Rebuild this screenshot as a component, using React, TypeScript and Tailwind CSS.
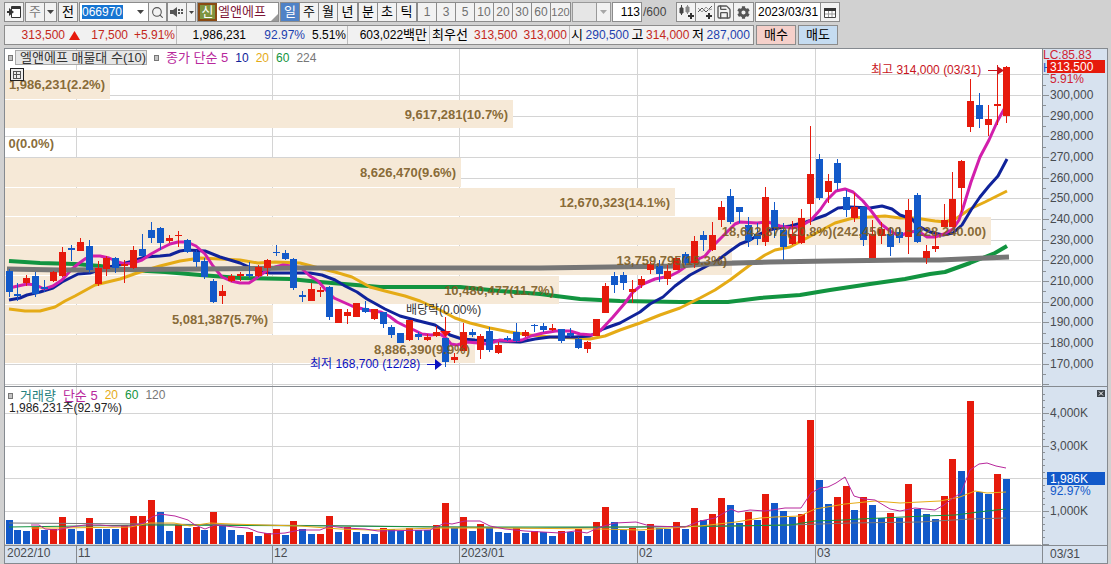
import type { ReactNode } from "react";
import { Save, Search } from "lucide-react";
import { FaCog } from "react-icons/fa";

type Tone = "r" | "b";

// tone, body top, body bottom, wick top, wick bottom
type Candle = [Tone, number, number, number, number];

const FILL: Record<Tone, string> = { r: "#e61a0c", b: "#1259c9" };

const STEP = 8.905;
const xAt = (i: number) => Math.round(9.5 + i * STEP);

const CANDLES: Candle[] = [
  ["b", 271, 292, 269, 297], ["b", 294, 296, 283, 301], ["r", 278, 283, 275, 286], ["b", 276, 294, 272, 297],
  ["b", 287, 289, 280, 292], ["r", 272, 281, 271, 282], ["r", 252, 276, 247, 277], ["b", 248, 250, 245, 261],
  ["r", 242, 251, 238, 251], ["b", 246, 270, 240, 273], ["r", 268, 284, 261, 286], ["r", 258, 269, 256, 276],
  ["b", 258, 268, 257, 273], ["r", 264, 266, 260, 283], ["r", 250, 268, 246, 269], ["b", 249, 256, 234, 257],
  ["b", 230, 238, 222, 243], ["b", 228, 243, 227, 250], ["r", 238, 241, 235, 243], ["r", 235, 236, 231, 247],
  ["b", 240, 252, 239, 253], ["b", 252, 262, 250, 267], ["b", 261, 277, 258, 279], ["b", 281, 302, 279, 303],
  ["r", 291, 296, 285, 304], ["r", 276, 281, 274, 282], ["r", 274, 276, 272, 281], ["b", 274, 276, 262, 278],
  ["r", 267, 276, 265, 277], ["r", 260, 268, 259, 276], ["b", 252, 253, 245, 256], ["b", 253, 259, 250, 260],
  ["b", 259, 288, 258, 290], ["b", 295, 297, 291, 302], ["r", 289, 301, 283, 301], ["r", 290, 292, 287, 297],
  ["b", 287, 317, 286, 320], ["r", 309, 323, 309, 323], ["r", 312, 316, 309, 324], ["r", 303, 317, 303, 317],
  ["b", 308, 312, 301, 313], ["r", 309, 319, 309, 320], ["b", 312, 324, 312, 328], ["b", 327, 335, 325, 338],
  ["b", 333, 343, 333, 343], ["r", 320, 340, 320, 341], ["b", 334, 337, 332, 340], ["r", 337, 340, 334, 341],
  ["r", 332, 336, 326, 337], ["b", 338, 362, 338, 367], ["r", 357, 360, 353, 363], ["r", 332, 351, 323, 351],
  ["b", 332, 335, 329, 337], ["r", 336, 350, 334, 359], ["b", 331, 350, 327, 352], ["r", 345, 353, 342, 354],
  ["b", 338, 340, 336, 341], ["b", 332, 341, 323, 342], ["r", 332, 336, 330, 337], ["b", 325, 326, 324, 332],
  ["b", 326, 330, 323, 332], ["r", 328, 330, 324, 331], ["b", 329, 341, 329, 343], ["b", 333, 336, 328, 337],
  ["b", 339, 348, 337, 349], ["r", 342, 349, 341, 353], ["r", 319, 336, 319, 336], ["r", 286, 313, 283, 313],
  ["b", 276, 285, 272, 293], ["b", 275, 283, 272, 290], ["r", 289, 292, 280, 303], ["r", 279, 285, 276, 288],
  ["r", 264, 270, 262, 274], ["b", 266, 274, 260, 282], ["r", 271, 279, 265, 285], ["r", 258, 270, 258, 270],
  ["b", 254, 263, 252, 265], ["r", 241, 263, 236, 268], ["b", 235, 240, 231, 251], ["r", 235, 250, 222, 251],
  ["r", 207, 220, 201, 227], ["b", 196, 222, 189, 224], ["b", 207, 212, 207, 223], ["b", 225, 241, 217, 247],
  ["b", 234, 239, 223, 245], ["r", 197, 242, 187, 246], ["b", 210, 228, 202, 238], ["b", 230, 247, 223, 260],
  ["r", 234, 244, 221, 245], ["r", 218, 243, 209, 244], ["r", 174, 204, 126, 225], ["b", 159, 198, 154, 200],
  ["r", 181, 192, 174, 203], ["b", 163, 183, 159, 190], ["b", 197, 210, 190, 217], ["r", 207, 218, 193, 222],
  ["b", 207, 240, 207, 246], ["r", 234, 258, 220, 258], ["r", 229, 236, 222, 244], ["b", 234, 247, 227, 256],
  ["b", 232, 238, 227, 243], ["r", 210, 237, 199, 254], ["b", 195, 242, 193, 243], ["r", 251, 258, 245, 264],
  ["r", 246, 249, 232, 252], ["r", 220, 227, 204, 227], ["r", 199, 227, 172, 227], ["r", 161, 188, 160, 212],
  ["r", 101, 127, 79, 132], ["b", 105, 119, 93, 128], ["r", 119, 125, 105, 136], ["r", 104, 106, 65, 125],
  ["r", 67, 116, 66, 123],
];

const VOLUMES =
  "b520 b530 b531 r527 b530 r529 r517 b529 b531 r518 b529 b529 b529 r525 r516 r516 r500 b512 b531 r525 " +
  "b528 r527 b530 r512 b525 b530 b535 r532 b536 r533 r529 b535 r521 b529 b534 r534 r516 b532 r527 b532 " +
  "b534 b534 r528 b529 b531 r528 b530 b530 r525 r503 b528 r517 b531 r524 b527 b532 b533 r528 b533 r531 " +
  "b532 b536 r531 b532 r529 b536 r522 r507 b522 b530 r528 b531 r524 b528 b529 r522 b529 r508 b520 r514 " +
  "r498 b505 b523 r512 b520 r494 b503 b511 b517 r514 r420 b480 b504 r497 r486 b510 r497 b505 b518 r513 " +
  "b518 r484 b509 b514 b519 r496 r459 b471 r401 b492 b494 r474 b479";

const MA5 =
  "9,288 18,286 27,284 36,285 44,289 53,286 62,280 71,270 78,264 85,259 92,256 100,256 109,258 118,262 125,264 133,263 142,260 151,254 160,249 170,244 178,242 187,242 196,246 205,254 213,266 222,277 231,281 240,283 249,283 258,277 266,271 275,267 283,265 292,266 301,268 310,276 318,281 325,289 334,298 343,302 352,306 363,309 372,311 381,312 389,316 397,322 405,326 414,330 422,334 431,335 440,334 446,338 451,344 457,345 467,342 478,343 487,344 500,340 510,341 522,340 531,336 543,333 556,331 570,331 580,334 592,335 600,331 613,317 625,303 633,292 643,284 655,279 670,276 678,272 692,262 705,256 715,244 725,234 735,224 740,222 757,223 768,222 780,226 792,228 801,226 811,220 820,210 827,200 836,191 845,189 853,192 863,201 872,212 881,224 890,231 899,236 910,232 918,231 927,237 935,237 944,234 953,229 959,220 963,208 971,182 980,157 989,140 998,120 1007,104";
const MA10 =
  "9,300 20,298 27,295 40,292 53,288 62,282 78,274 90,273 105,268 118,265 133,261 145,257 160,256 170,255 180,251 187,250 205,251 220,257 240,263 258,271 270,273 310,273 322,275 335,280 345,286 357,292 367,299 385,309 400,316 415,320 435,325 450,335 462,339 475,340 500,341 520,342 535,339 550,337 575,337 590,336 603,329 620,323 640,312 650,304 663,297 675,286 690,275 705,267 718,260 730,251 740,244 750,240 760,234 773,229 790,226 806,222 826,215 838,208 850,207 870,208 882,206 892,209 900,215 912,219 918,226 930,232 943,235 953,233 962,225 971,210 980,197 989,186 998,176 1007,159";
const MA20 =
  "9,309 25,311 40,311 55,307 65,301 75,296 95,285 120,279 140,272 160,266 180,261 200,258 220,259 240,260 258,263 275,262 300,263 315,267 335,272 352,277 370,287 385,291 405,296 420,301 440,310 455,318 470,323 490,328 510,332 530,335 550,337 575,338 590,339 605,336 620,330 640,323 660,315 680,308 700,298 715,290 730,280 750,265 765,255 775,250 790,247 805,239 820,231 835,223 853,218 870,217 885,216 900,218 915,218 935,221 945,222 957,218 970,209 985,202 1007,191";
const MA60 =
  "9,261 40,263 75,264 100,266 130,270 165,272 200,275 240,278 290,279 320,282 380,287 460,287 500,291 540,294 580,299 620,301 680,302 728,302 760,298 800,295 830,290 870,284 905,279 930,274 945,272 970,263 985,257 995,253 1007,246";
const MA224 =
  "7,269 60,270 200,269 300,268 540,268 680,266 705,264 770,262 830,261 905,260 940,260 985,258 1009,257";

const VMA5 =
  "31,525 39,525 45,529 57,530 70,527 85,525 100,525 112,526 130,526 144,523 152,517 160,514 175,516 188,520 195,525 205,529 215,525 235,527 248,528 258,532 270,534 285,533 300,530 320,530 330,526 345,528 365,529 378,531 430,530 445,523 452,524 465,521 480,521 490,526 505,529 525,531 560,533 575,531 587,533 600,527 615,523 636,522 650,526 685,527 700,521 715,518 731,509 738,512 750,510 765,511 785,508 801,508 811,493 820,488 828,487 836,483 845,477 854,496 864,499 875,500 890,509 900,511 915,508 935,510 944,505 953,498 961,493 970,470 979,464 987,463 996,466 1006,468";
const VMA20 =
  "31,528 60,528 130,527 150,523 174,523 190,526 210,523 232,524 262,525 300,526 340,529 370,530 440,528 500,528 600,529 640,530 700,526 736,522 760,518 775,517 800,516 815,509 845,504 875,501 900,503 940,501 960,497 975,491 987,493 1006,492";
const VMA60 =
  "9,527 150,525 340,526 440,527 640,527 730,526 790,525 815,521 845,520 860,519 925,516 955,515 987,511 1006,509";
const VMA120 =
  "9,523 150,524 250,525 365,526 530,528 730,526 790,525 850,523 920,522 970,519 1006,518";

// volume profile: top, bottom, right edge, label
const PROFILE: [number, number, number, string][] = [
  [70, 99, 110, "1,986,231(2.2%)"],
  [100, 128, 513, "9,617,281(10.7%)"],
  [129, 156, 5, "0(0.0%)"],
  [158, 187, 461, "8,626,470(9.6%)"],
  [188, 216, 675, "12,670,323(14.1%)"],
  [217, 245, 991, "18,642,872(20.8%)(242,450.00 ~ 228,240.00)"],
  [246, 275, 732, "13,759,795(15.3%)"],
  [276, 304, 559, "10,480,477(11.7%)"],
  [305, 334, 273, "5,081,387(5.7%)"],
  [335, 363, 475, "8,886,390(9.9%)"],
];

const MONTHS = [
  { x: 5, label: "2022/10" },
  { x: 76, label: "11" },
  { x: 272, label: "12" },
  { x: 459, label: "2023/01" },
  { x: 637, label: "02" },
  { x: 815, label: "03" },
];

const priceY = (price: number) => Math.round(95 + ((300 - price) * 20.67) / 10);
const volumeY = (k: number) => Math.round(543.5 - k * 0.0326);

const PRICES = Array.from({ length: 16 }, (_, i) => 310 - i * 10);

const box = "flex flex-none items-center justify-center border border-[#8c8c8c] bg-[#f2f2f2]";

function Caret({ muted = false }: { muted?: boolean }) {
  return (
    <svg width="7" height="4" viewBox="0 0 7 4" aria-hidden="true">
      <path d="M0 0h7L3.5 4z" fill={muted ? "#a8a8a8" : "#444"} />
    </svg>
  );
}

function IconButton({
  label,
  className = "w-5",
  children,
}: {
  label: string;
  className?: string;
  children: ReactNode;
}) {
  return (
    <button type="button" aria-label={label} className={`${box} h-5 ${className}`}>
      {children}
    </button>
  );
}

function Segments({ items, active, muted }: { items: string[]; active?: string; muted?: boolean }) {
  return (
    <div className="flex flex-none border border-[#8c8c8c] divide-x divide-[#8c8c8c]">
      {items.map((item) => (
        <button
          key={item}
          type="button"
          className={`h-[18px] w-[19px] text-center leading-[18px] ${
            item === active ? "bg-[#4f82c6] text-white" : muted ? "bg-[#f2f2f2] text-[#707070]" : "bg-[#f2f2f2]"
          } ${muted ? (item.length > 2 ? "text-[11px]" : "") : "text-[13px]"}`}
        >
          {item}
        </button>
      ))}
    </div>
  );
}

function Toolbar() {
  return (
    <div className="flex h-5 items-stretch whitespace-nowrap">
      <IconButton label="패널 열기">
        <svg width="15" height="14" viewBox="0 0 15 14" className="flex-none" aria-hidden="true">
          <path d="M4.500 1.500h9v11h-9z" fill="#fff" stroke="#333" />
          <path d="M5 3h8" stroke="#333" strokeWidth="2" />
          <path d="M0 7h3" stroke="#333" strokeWidth="2" />
          <path d="M2 3v8l5-4z" fill="#333" />
        </svg>
      </IconButton>
      <button type="button" className={`${box} ml-px w-5 text-[13px] text-[#777]`}>주</button>
      <IconButton label="시장 선택" className="-ml-px w-[13px]"><Caret /></IconButton>
      <button type="button" className={`${box} ml-px w-5 text-[13px]`}>전</button>
      <div className="ml-px flex w-[70px] flex-none items-center border border-[#8c8c8c] bg-white">
        <input
          aria-label="종목코드"
          defaultValue="066970"
          className="ml-[2px] h-[14px] w-[41px] bg-[#1675d2] text-white outline-none"
        />
        <button type="button" aria-label="종목 목록" className="ml-auto mr-1">
          <Caret />
        </button>
      </div>
      <IconButton label="검색" className="-ml-px w-[19px]">
        <Search size={13} color="#555" />
      </IconButton>
      <IconButton label="소리">
        <svg width="14" height="10" viewBox="0 0 14 10" aria-hidden="true">
          <path d="M0 3h3l4-3v10L3 7H0z" fill="#555" />
          <path d="M9 2v6M12 2v6" stroke="#555" strokeWidth="2" strokeDasharray="2 1" />
        </svg>
      </IconButton>
      <IconButton label="소리 설정" className="-ml-px w-[10px]">
        <svg width="5" height="3" viewBox="0 0 5 3" className="flex-none" aria-hidden="true">
          <path d="M0 0h5L2.500 3z" fill="#444" />
        </svg>
      </IconButton>
      <div className="ml-px flex w-[82px] flex-none items-center border border-[#8c8c8c] bg-white">
        <span className="flex h-[18px] w-[19px] flex-none items-center justify-center border-2 border-[#8a4a13] bg-[#7d9440] text-[13px] text-white">
          신
        </span>
        <span className="ml-px text-[13px] text-[#7d1538]">엘앤에프</span>
        <svg className="ml-auto self-end" width="7" height="7" viewBox="0 0 7 7" aria-hidden="true">
          <path d="M7 0v7H0z" fill="#999" />
        </svg>
      </div>
      <div className="flex flex-none pl-px">
        <Segments items={["일", "주", "월", "년"]} active="일" />
        <Segments items={["분", "초", "틱"]} />
        <Segments items={["1", "3", "5", "10", "20", "30", "60", "120"]} muted />
      </div>
      <button type="button" aria-label="주기 선택" disabled className="ml-px flex w-[39px] flex-none border border-[#999] bg-[#e6e6e6]">
        <span className="ml-auto flex h-full w-[14px] items-center justify-center border-l border-[#999] bg-[#f2f2f2]">
          <Caret muted />
        </span>
      </button>
      <input
        aria-label="표시 봉수"
        defaultValue="113"
        className="ml-px w-[30px] flex-none border border-[#8c8c8c] bg-white pr-px text-right outline-none"
      />
      <span className="w-[34px] flex-none pl-px leading-5 text-[#444]">/600</span>
      <div className="flex flex-none">
        <IconButton label="봉 추가">
          <svg width="15" height="14" viewBox="0 0 15 14" aria-hidden="true">
            <path d="M2.500 0v10" stroke="#444" />
            <path d="M1 3h3v5H1z" fill="#444" stroke="#444" />
            <path d="M8.500 0v9" stroke="#888" />
            <path d="M7 2h3v5H7z" fill="#888" stroke="#888" />
            <path d="M9 11h6M12 8v6" stroke="#333" strokeWidth="2" />
          </svg>
        </IconButton>
        <IconButton label="지표 추가" className="-ml-px w-5">
          <svg width="15" height="14" viewBox="0 0 15 14" fill="none" aria-hidden="true">
            <path d="M0 7l4-4 4 4 6-6" stroke="#555" />
            <path d="M0 3l4 4 4-5 3 3 3-1" stroke="#999" />
            <path d="M8 11h6M11 8v6" stroke="#333" strokeWidth="2" />
          </svg>
        </IconButton>
        <IconButton label="저장" className="-ml-px w-5">
          <Save size={16} color="#555" strokeWidth={2} />
        </IconButton>
        <IconButton label="설정" className="-ml-px w-[21px]">
          <FaCog size={13} color="#555" />
        </IconButton>
      </div>
      <input
        aria-label="기준일"
        defaultValue="2023/03/31"
        className="ml-px w-[66px] flex-none border border-[#8c8c8c] bg-white pl-[2px] outline-none"
      />
      <IconButton label="달력" className="-ml-px w-5">
        <svg width="12" height="11" viewBox="0 0 12 11" aria-hidden="true">
          <path d="M.5 1.500h11v9H.5z" fill="#fff" stroke="#444" />
          <path d="M0 2.500h12" stroke="#333" strokeWidth="3" />
          <path d="M1 7h10M4.500 4v6M8 4v6" stroke="#999" />
        </svg>
      </IconButton>
    </div>
  );
}

function QuoteBar() {
  return (
    <div className="mt-[3px] flex h-5 whitespace-nowrap">
      <div className="flex w-[750px] flex-none border border-[#8c8c8c] bg-[#f1f1f1] leading-[18px] divide-x divide-[#bbb]">
        <div className="flex w-[172px] items-center justify-end text-[#c4281c]">
          <span>313,500</span>
          <svg className="ml-1" width="11" height="9" viewBox="0 0 11 9" aria-hidden="true">
            <path d="M5.500 0L11 9H0z" fill="#e61a0c" />
          </svg>
          <span className="w-12 text-right">17,500</span>
          <span className="w-12 pr-px text-right">+5.91%</span>
        </div>
        <div className="flex w-[171px] justify-end">
          <span>1,986,231</span>
          <span className="w-[59px] text-right text-[#1d3fae]">92.97%</span>
          <span className="w-[42px] pr-px text-right">5.51%</span>
        </div>
        <div className="w-[82px] pr-[2px] text-right">
          603,022<span className="text-[13px]">백만</span>
        </div>
        <div className="flex w-[140px] justify-between px-[2px] text-[#c4281c]">
          <span className="text-[13px] text-black">최우선</span>
          <span>313,500</span>
          <span>313,000</span>
        </div>
        <dl className="flex flex-1 justify-between pl-px pr-[3px] text-[#1d3fae]">
          <dt className="text-[13px] text-black">시</dt>
          <dd>290,500</dd>
          <dt className="text-[13px] text-black">고</dt>
          <dd className="text-[#c4281c]">314,000</dd>
          <dt className="text-[13px] text-black">저</dt>
          <dd>287,000</dd>
        </dl>
      </div>
      <button type="button" className="ml-[2px] w-10 border border-[#8c8c8c] bg-[#f5d0ca] text-[13px] leading-[18px]">
        매수
      </button>
      <button type="button" className="ml-[2px] w-10 border border-[#8c8c8c] bg-[#c5dcf1] text-[13px] leading-[18px]">
        매도
      </button>
    </div>
  );
}

function Bullet() {
  return <span className="h-[6px] w-[5px] flex-none border border-[#777] bg-[#c4c4c4]" />;
}

function PricePlot() {
  return (
    <svg
      role="img"
      aria-label="엘앤에프 일봉 차트"
      viewBox="5 49 1037 337"
      preserveAspectRatio="xMaxYMid meet"
      className="block h-[337px] w-full text-[12px]"
    >
      <g stroke="#d4d4d4" shapeRendering="crispEdges">
        {PRICES.map((p) => (
          <line key={p} x1="5" x2="1041" y1={priceY(p) + 0.5} y2={priceY(p) + 0.5} />
        ))}
        {MONTHS.slice(1).map((m) => (
          <line key={m.x} x1={m.x + 0.5} x2={m.x + 0.5} y1="49" y2="386" />
        ))}
      </g>
      <g fill="#f6e9d7">
        {PROFILE.map(([top, bottom, right]) => (
          <rect key={top} x="5" y={top} width={right - 5} height={bottom - top} />
        ))}
      </g>
      <g fill="none" strokeLinejoin="round">
        <polyline points={MA60} stroke="#129440" strokeWidth="4" />
        <polyline points={MA20} stroke="#e5ab16" strokeWidth="3" />
        <polyline points={MA10} stroke="#10239a" strokeWidth="3" />
        <polyline points={MA5} stroke="#d21fac" strokeWidth="3" />
        <polyline points={MA224} stroke="#767676" strokeWidth="5" />
      </g>
      <g shapeRendering="crispEdges">
        {CANDLES.map(([tone, top, bottom, high, low], i) => (
          <g key={i} fill={FILL[tone]}>
            <rect x={xAt(i) - 1} y={high} width="1" height={low - high} />
            <rect x={xAt(i) - 4} y={top} width="7" height={bottom - top} />
          </g>
        ))}
      </g>
      <g fill="#7a5a23" fillOpacity="0.9" textAnchor="end" className="text-[13px] font-bold">
        {PROFILE.map(([top, , right, label]) => (
          <text key={label} x={label.startsWith("0(") ? 54 : right - 5} y={top + 19}>
            {label}
          </text>
        ))}
      </g>
      <path d="M445.500 317v15" stroke="#e61a0c" />
      <path d="M440 331h11l-5.500 6z" fill="#f01010" />
      <text x="406" y="314" fill="#333">배당락(0.00%)</text>
      <g fill="#c8141c">
        <text x="871" y="74">최고 314,000 (03/31)</text>
        <path d="M988 70h9v-4l7 4.500-7 4.500v-4h-9z" />
      </g>
      <g fill="#0a10c0">
        <text x="310" y="368">최저 168,700 (12/28)</text>
        <path d="M427 364h8v-5l7 5.500-7 5.500v-5h-8z" />
      </g>
      <g stroke="#222" fill="#eee" shapeRendering="crispEdges">
        <rect x="10.500" y="68.500" width="13" height="12" strokeWidth="1" />
        <path d="M13 71.500h8M13 74.500h8M13 78.500h8M13.500 71v8M16.500 71v8M20.500 71v8" stroke="#555" />
      </g>
    </svg>
  );
}

function PriceAxis() {
  return (
    <svg
      role="img"
      aria-label="가격 축"
      viewBox="1043 49 64 337"
      className="block h-[337px] w-16 flex-none text-[12px]"
    >
      <g stroke="#8c9196" shapeRendering="crispEdges">
        {PRICES.map((p) => (
          <g key={p}>
            <line x1="1043" x2="1049" y1={priceY(p) + 0.5} y2={priceY(p) + 0.5} />
            <line x1="1043" x2="1046" y1={priceY(p - 5) + 0.5} y2={priceY(p - 5) + 0.5} />
          </g>
        ))}
      </g>
      <g fill="#474b50">
        {PRICES.slice(1, -1).map((p) => (
          <text key={p} x="1050" y={priceY(p) + 4}>
            {`${p},000`}
          </text>
        ))}
      </g>
      <g fill="#cf2233">
        <text x="1043" y="59">LC:85.83</text>
        <text x="1050" y="83">5.91%</text>
      </g>
      <text x="1043" y="72" fill="#1259c9">H</text>
      <rect x="1047" y="60" width="58" height="13" fill="#e61a0c" />
      <text x="1050" y="71" fill="#fff">313,500</text>
    </svg>
  );
}

function VolumePlot() {
  return (
    <svg
      role="img"
      aria-label="거래량 차트"
      viewBox="5 387 1037 158"
      preserveAspectRatio="xMaxYMid meet"
      className="block h-[158px] w-full"
    >
      <g stroke="#d4d4d4" shapeRendering="crispEdges">
        {[4000, 3000, 2000, 1000, 0].map((k) => (
          <line key={k} x1="5" x2="1041" y1={volumeY(k) + 0.5} y2={volumeY(k) + 0.5} />
        ))}
        {MONTHS.slice(1).map((m) => (
          <line key={m.x} x1={m.x + 0.5} x2={m.x + 0.5} y1="387" y2="545" />
        ))}
      </g>
      <g shapeRendering="crispEdges">
        {VOLUMES.split(" ").map((v, i) => {
          const top = Number(v.slice(1));
          return (
            <rect key={i} x={xAt(i) - 4} y={top} width="7" height={544 - top} fill={FILL[v[0] as Tone]} />
          );
        })}
      </g>
      <g fill="none" strokeWidth="1">
        <polyline points={VMA120} stroke="#777" />
        <polyline points={VMA60} stroke="#129440" />
        <polyline points={VMA20} stroke="#e5ab16" />
        <polyline points={VMA5} stroke="#b8289c" />
      </g>
    </svg>
  );
}

function VolumeAxis() {
  return (
    <svg
      role="img"
      aria-label="거래량 축"
      viewBox="1043 387 64 158"
      className="block h-[158px] w-16 flex-none text-[12px]"
    >
      <g stroke="#8c9196" shapeRendering="crispEdges">
        {Array.from({ length: 24 }, (_, i) => {
          const y = volumeY(i * 200) + 0.5;
          return <line key={i} x1="1043" x2={i % 5 === 0 ? 1049 : 1045} y1={y} y2={y} />;
        })}
      </g>
      <g fill="#474b50">
        <text x="1050" y="417">4,000K</text>
        <text x="1050" y="450">3,000K</text>
        <text x="1050" y="515">1,000K</text>
      </g>
      <rect x="1047" y="472" width="58" height="13" fill="#1259c9" />
      <text x="1050" y="483" fill="#fff">1,986K</text>
      <text x="1050" y="495" fill="#1259c9">92.97%</text>
      <rect x="1097" y="390" width="8" height="7" fill="#3c4248" />
      <path d="M1099 391.500l4 4M1103 391.500l-4 4" stroke="#fff" />
    </svg>
  );
}

export default function App() {
  return (
    <div className="bg-[#d1d1d1] pb-px font-['Liberation_Sans','Noto_Sans_CJK_KR',sans-serif] text-[12px] text-black">
      <header className="pb-[3px] pl-1 pt-[2px]">
        <Toolbar />
        <QuoteBar />
      </header>

      <main className="ml-1 mr-[3px] border border-[#858a90] bg-white">
        <section className="flex">
          <div className="relative min-w-0 flex-1">
            <PricePlot />
            <div className="absolute left-[3px] top-px flex h-[15px] items-center gap-[7px] whitespace-nowrap">
              <Bullet />
              <span className="-ml-[5px] w-[132px] border border-[#aaa] bg-[#e6e6e6] pl-1 text-[13px] leading-[13px] text-[#333]">
                엘앤에프 매물대 수(10)
              </span>
              <Bullet />
              <span className="text-[13px] text-[#b8289c]">종가 단순 5</span>
              <span className="text-[#10239a]">10</span>
              <span className="text-[#e5ab16]">20</span>
              <span className="text-[#129440]">60</span>
              <span className="text-[#777]">224</span>
            </div>
          </div>
          <div className="border-l border-[#858a90] bg-[#d7e2ef]">
            <PriceAxis />
          </div>
        </section>

        <section className="flex border-t border-[#858a90]">
          <div className="relative min-w-0 flex-1">
            <VolumePlot />
            <div className="absolute left-[3px] top-[2px] whitespace-nowrap leading-[13px]">
              <div className="flex items-center gap-[7px]">
                <Bullet />
                <span className="text-[13px] text-[#23807c]">거래량</span>
                <span className="text-[13px] text-[#b8289c]">단순 5</span>
                <span className="text-[#e5ab16]">20</span>
                <span className="text-[#129440]">60</span>
                <span className="text-[#777]">120</span>
              </div>
              <p className="pl-px text-[#222]">1,986,231주(92.97%)</p>
            </div>
          </div>
          <div className="border-l border-[#858a90] bg-[#d7e2ef]">
            <VolumeAxis />
          </div>
        </section>

        <footer className="flex h-[18px] border-t border-[#858a90] bg-[#d7e2ef] leading-[16px] text-[#474b50]">
          <svg
            role="img"
            aria-label="날짜 축"
            viewBox="5 546 1037 17"
            preserveAspectRatio="xMaxYMid meet"
            className="block h-[17px] min-w-0 flex-1"
          >
            {MONTHS.map((m) => (
              <g key={m.x}>
                {m.x > 5 && <path d={`M${m.x + 0.5} 546v17`} stroke="#858a90" />}
                <text x={m.x + 2} y="557" fill="#474b50">
                  {m.label}
                </text>
              </g>
            ))}
          </svg>
          <time className="w-[65px] border-l border-[#858a90] pl-[7px]">03/31</time>
        </footer>
      </main>
    </div>
  );
}
